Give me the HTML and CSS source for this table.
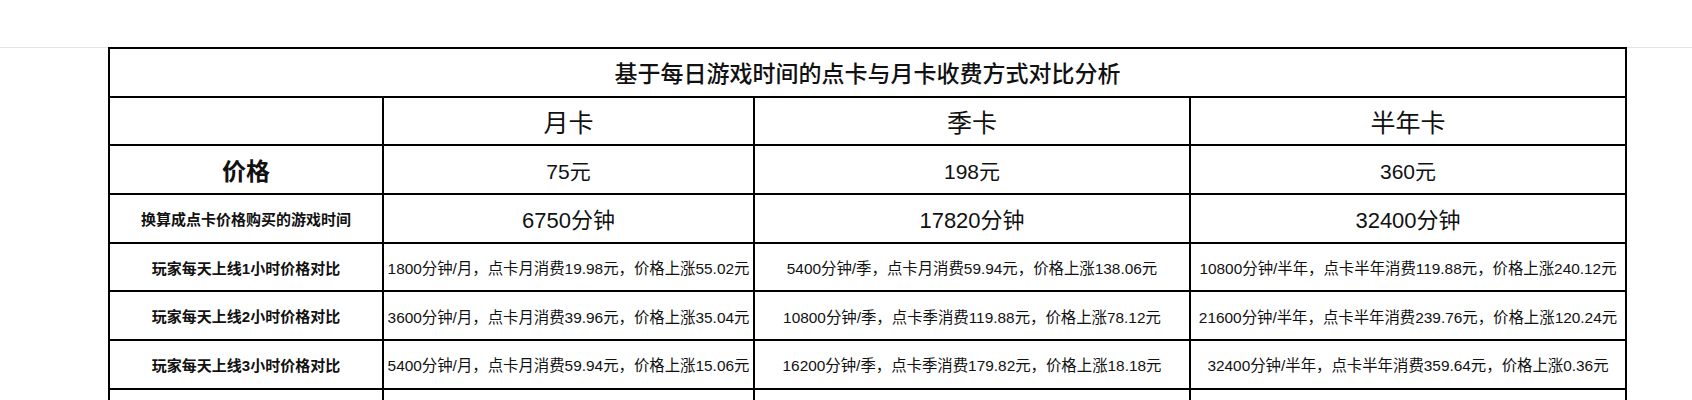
FILE: index.html
```html
<!DOCTYPE html>
<html lang="zh-CN">
<head>
<meta charset="utf-8">
<title>基于每日游戏时间的点卡与月卡收费方式对比分析</title>
<link rel="stylesheet" href="styles.css">
</head>
<body>
<div class="page">
  <div class="sheet">
    <table class="cmp">
      <colgroup>
        <col class="c1"><col class="c2"><col class="c3"><col class="c4">
      </colgroup>
      <tr class="title-row"><td colspan="4">基于每日游戏时间的点卡与月卡收费方式对比分析</td></tr>
      <tr class="head-row"><td></td><td>月卡</td><td>季卡</td><td>半年卡</td></tr>
      <tr class="price-row"><td class="lbl-big">价格</td><td>75元</td><td>198元</td><td>360元</td></tr>
      <tr class="time-row"><td class="lbl">换算成点卡价格购买的游戏时间</td><td>6750分钟</td><td>17820分钟</td><td>32400分钟</td></tr>
      <tr class="data-row"><td class="lbl">玩家每天上线1小时价格对比</td><td>1800分钟/月，点卡月消费19.98元，价格上涨55.02元</td><td>5400分钟/季，点卡月消费59.94元，价格上涨138.06元</td><td>10800分钟/半年，点卡半年消费119.88元，价格上涨240.12元</td></tr>
      <tr class="data-row"><td class="lbl">玩家每天上线2小时价格对比</td><td>3600分钟/月，点卡月消费39.96元，价格上涨35.04元</td><td>10800分钟/季，点卡季消费119.88元，价格上涨78.12元</td><td>21600分钟/半年，点卡半年消费239.76元，价格上涨120.24元</td></tr>
      <tr class="data-row"><td class="lbl">玩家每天上线3小时价格对比</td><td>5400分钟/月，点卡月消费59.94元，价格上涨15.06元</td><td>16200分钟/季，点卡季消费179.82元，价格上涨18.18元</td><td>32400分钟/半年，点卡半年消费359.64元，价格上涨0.36元</td></tr>
      <tr class="data-row"><td class="lbl">&nbsp;</td><td>&nbsp;</td><td>&nbsp;</td><td>&nbsp;</td></tr>
    </table>
  </div>
</div>
</body>
</html>
```

FILE: styles.css
```css
html, body {
  margin: 0;
  padding: 0;
  background: #ffffff;
}

.page {
  padding-top: 47px;
  font-family: "Liberation Sans", "Noto Sans CJK SC", sans-serif;
  color: #111;
}

.sheet {
  border-top: 1px solid #e4e4e4;
}

.cmp {
  margin-top: -1px;
  margin-left: 108px;
  width: 1517px;
  table-layout: fixed;
  border-collapse: collapse;
}

.c1 { width: 274px; }
.c2 { width: 371px; }
.c3 { width: 436px; }
.c4 { width: 436px; }

.cmp td {
  border: 2px solid #000;
  height: 46.7px;
  padding: 0;
  text-align: center;
  vertical-align: middle;
  white-space: nowrap;
  font-size: 15.4px;
}

.title-row td {
  font-size: 23px;
  font-weight: 500;
}

.head-row td {
  font-size: 25px;
}

.price-row td {
  font-size: 21px;
}

.price-row td.lbl-big {
  font-size: 24px;
  font-weight: bold;
}

.time-row td {
  font-size: 22px;
}

.cmp td.lbl {
  font-size: 15px;
  font-weight: bold;
}

.data-row td {
  font-size: 15.4px;
}
```
